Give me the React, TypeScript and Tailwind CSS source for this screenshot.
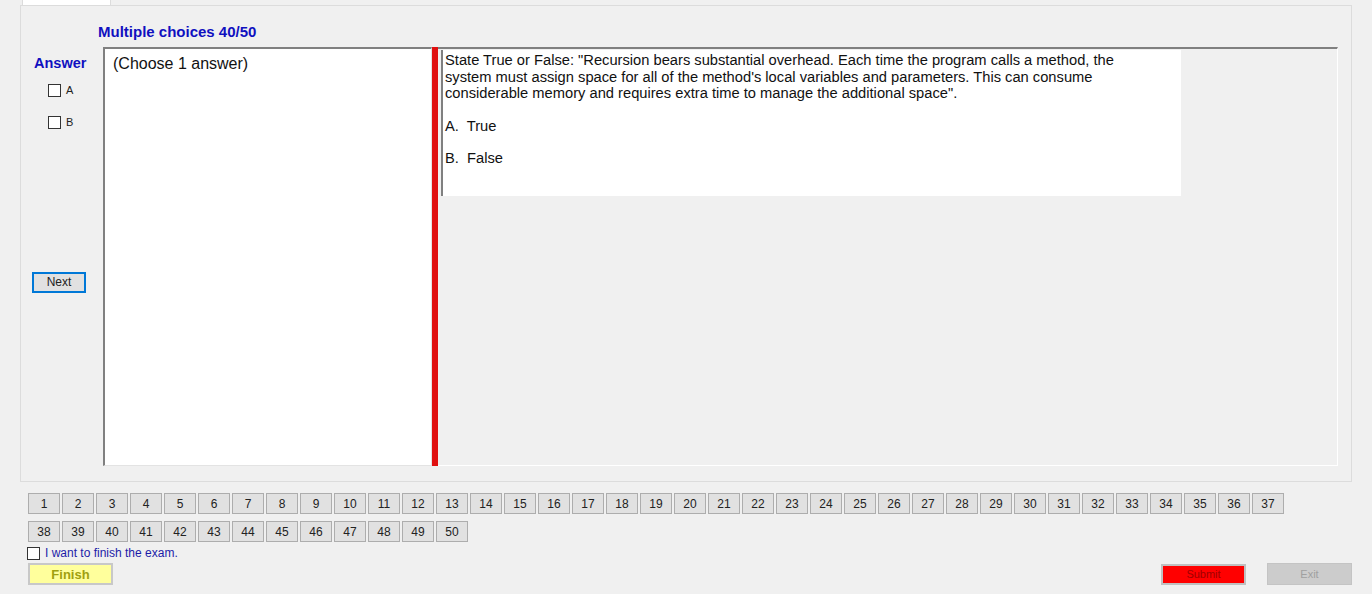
import * as React from "react";

const font = { fontFamily: '"Liberation Sans", Arial, sans-serif' };

const NumButton: React.FC<{ n: number }> = ({ n }) => (
  <button className="w-[32px] h-[21px] bg-[#e1e1e1] border border-[#adadad] text-[12px] text-[#222] leading-none">
    {n}
  </button>
);

const Check: React.FC<{ label?: string }> = ({ label }) => (
  <div className="flex items-center gap-[5px] h-[16px]">
    <span className="w-[13px] h-[13px] bg-white border border-[#333]" />
    {label && <span className="text-[11px] text-[#222]">{label}</span>}
  </div>
);

export default function App() {
  const row1 = Array.from({ length: 37 }, (_, i) => i + 1);
  const row2 = Array.from({ length: 13 }, (_, i) => i + 38);

  return (
    <div className="w-[1372px] h-[594px] bg-[#f0f0f0] overflow-hidden" style={font}>
      {/* tab strip */}
      <div className="h-[5px] pl-[22px]">
        <div className="w-[89px] h-[5px] bg-white border-x border-[#dcdcdc]" />
      </div>

      {/* tab page */}
      <div className="ml-[20px] w-[1332px] h-[477px] border border-[#dcdcdc] bg-[#f0f0f0]">
        <div className="pl-[77px] pt-[16px] h-[41px] text-[15px] font-bold text-[#1010c0] leading-[20px]">
          Multiple choices 40/50
        </div>
        <div className="flex">
          {/* answer column */}
          <div className="w-[82px] flex flex-col">
            <div className="pl-[13px] pt-[7px] text-[14.5px] font-bold text-[#1010c0] leading-[18px]">Answer</div>
            <div className="pl-[27px] pt-[10px] flex flex-col gap-[16px]">
              <Check label="A" />
              <Check label="B" />
            </div>
            <div className="pl-[11px] pt-[139px]">
              <button className="w-[54px] h-[21px] bg-[#e1e1e1] border-2 border-[#0078d7] text-[12px] text-[#222] leading-none">
                Next
              </button>
            </div>
          </div>

          {/* choose box */}
          <div className="w-[329px] h-[419px] bg-white border-t-2 border-l-2 border-t-[#808080] border-l-[#808080] border-r border-b border-r-[#e3e3e3] border-b-[#e3e3e3] pl-[8px] pt-[5px] text-[16px] leading-[20px] text-[#111]">
            (Choose 1 answer)
          </div>

          {/* splitter */}
          <div className="w-[6px] h-[419px] bg-[#e01010]" />

          {/* question panel */}
          <div className="w-[900px] h-[419px] border-t-2 border-t-[#808080] border-r border-r-[#ffffff] border-b border-b-[#ffffff] pl-[3px] pt-[1px]">
            <div className="w-[740px] h-[146px] bg-white border-l-2 border-l-[#808080] pl-[2px] pt-[2px] text-[14.7px] leading-[16.5px] text-[#111] whitespace-nowrap">
              <p>
                State True or False: "Recursion bears substantial overhead. Each time the program calls a method, the
                <br />
                system must assign space for all of the method's local variables and parameters. This can consume
                <br />
                considerable memory and requires extra time to manage the additional space".
              </p>
              <p className="mt-[16px]">A.&nbsp; True</p>
              <p className="mt-[16px]">B.&nbsp; False</p>
            </div>
          </div>
        </div>
      </div>

      {/* question numbers */}
      <div className="pl-[28px] pt-[11px] flex flex-col gap-[7px]">
        <div className="flex gap-[2px]">
          {row1.map((n) => (
            <NumButton key={n} n={n} />
          ))}
        </div>
        <div className="flex gap-[2px]">
          {row2.map((n) => (
            <NumButton key={n} n={n} />
          ))}
        </div>
      </div>

      <div className="pl-[27px] pt-[2px] flex items-center gap-[5px]">
        <span className="w-[13px] h-[13px] bg-white border border-[#333]" />
        <span className="text-[12px] text-[#1c1ca8]">I want to finish the exam.</span>
      </div>

      <div className="pl-[28px] pr-[20px] pt-[1px] flex items-center">
        <button className="w-[85px] h-[22px] bg-[#ffff9c] border-2 border-[#c8c8c8] text-[13px] font-bold text-[#a0a010] leading-none">
          Finish
        </button>
        <div className="flex-1" />
        <button className="w-[85px] h-[21px] bg-[#ff0000] border-2 border-[#c0c0c0] text-[11px] text-[#a00000] leading-none">
          Submit
        </button>
        <button className="ml-[21px] w-[85px] h-[22px] bg-[#cccccc] border border-[#c4c4c4] text-[11px] text-[#a0a0a0] leading-none">
          Exit
        </button>
      </div>
    </div>
  );
}
